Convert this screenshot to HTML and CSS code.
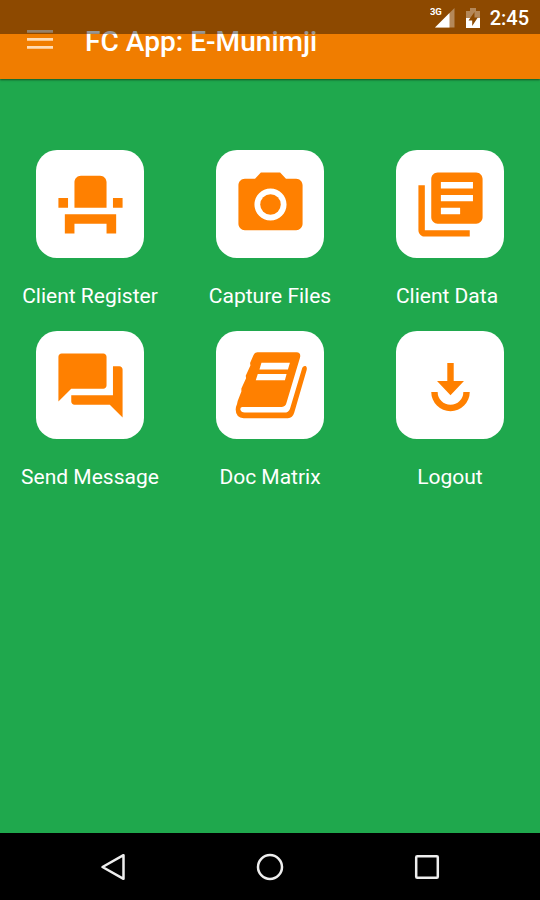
FILE: index.html
```html
<!DOCTYPE html>
<html lang="en">
<head>
  <meta charset="UTF-8" />
  <meta name="viewport" content="width=device-width, initial-scale=1.0"/>
  <title>FC App: E-Munimji</title>
  <link rel="stylesheet" href="styles.css">
</head>
<body>
  <div class="screen">
    <div class="status-bar">
      <svg class="signal" viewBox="0 0 26 22">
        <path class="dim" d="M24.500 2v19.500H5z"/>
        <path d="M19.500 7v14.500H5z"/>
        <text x="0" y="9">3G</text>
      </svg>
      <svg class="battery" viewBox="0 0 14 20">
        <path class="dim" d="M0 10V3h4V0h6v3h4v7z"/>
        <path d="M0 10h14v10H0z"/>
        <path class="bolt" d="M8.500 4L2.500 12.500h3.700V18l5.600-8.500H8.500z"/>
      </svg>
      <span class="clock">2:45</span>
    </div>

    <header class="app-bar">
      <svg class="menu" viewBox="0 0 26 19">
        <path d="M0 0h26v2.800H0zM0 8h26v2.800H0zM0 16h26v2.800H0z"/>
      </svg>
      <h1>FC App: E-Munimji</h1>
    </header>

    <main class="grid">
      <div class="item">
        <div class="tile">
          <svg viewBox="0 0 24 24"><path d="M4 18v3h3v-3h10v3h3v-6H4zm15-8h3v3h-3zM2 10h3v3H2zm15 3H7V5c0-1.100.9-2 2-2h6c1.100 0 2 .9 2 2v8z"/></svg>
        </div>
        <p>Client Register</p>
      </div>

      <div class="item">
        <div class="tile">
          <svg viewBox="0 0 24 24"><circle cx="12" cy="12" r="3.200"/><path d="M9 2L7.170 4H4c-1.100 0-2 .9-2 2v12c0 1.100.9 2 2 2h16c1.100 0 2-.9 2-2V6c0-1.100-.9-2-2-2h-3.170L15 2H9zm3 15c-2.760 0-5-2.240-5-5s2.240-5 5-5 5 2.240 5 5-2.240 5-5 5z"/></svg>
        </div>
        <p>Capture Files</p>
      </div>

      <div class="item">
        <div class="tile">
          <svg viewBox="0 0 24 24"><path d="M4 6H2v14c0 1.100.9 2 2 2h14v-2H4V6zm16-4H8c-1.100 0-2 .9-2 2v12c0 1.100.9 2 2 2h12c1.100 0 2-.9 2-2V4c0-1.100-.9-2-2-2zm-1 5H9V5h10v2zm0 4H9V9h10v2zm-4 4H9v-2h6v2z"/></svg>
        </div>
        <p class="shifted">Client Data</p>
      </div>

      <div class="item">
        <div class="tile">
          <svg viewBox="0 0 24 24"><path d="M21 6h-2v9H6v2c0 .55.450 1 1 1h11l4 4V7c0-.55-.45-1-1-1zm-4 6V3c0-.55-.45-1-1-1H3c-.55 0-1 .45-1 1v14l4-4h10c.55 0 1-.45 1-1z"/></svg>
        </div>
        <p>Send Message</p>
      </div>

      <div class="item">
        <div class="tile">
          <svg viewBox="0 0 230 230">
            <path d="M76 16H193Q207 17 203 32L163 166Q160 179 149 179H31Q24 179 25 187Q27 196 38 196H156Q169 196 173 185L210 62Q214 55 220 57Q225 60 223 69L186 196Q181 213 167 213H35Q11 211 11 187Q11 179 15 170L17 161L28 133L28 124L42 93L41 86L55 55L54 48L64 25Q68 16 76 16z"/>
            <path class="lines" d="M88 47H173L167 67H82zM77 81H163L158 99H71z"/>
          </svg>
        </div>
        <p>Doc Matrix</p>
      </div>

      <div class="item">
        <div class="tile">
          <svg viewBox="0 0 24 24"><path d="M11 5h2v5.600h3.200L12 15l-4.200-4.400H11zM6 14h2a4 4 0 0 0 8 0h2a6 6 0 0 1-12 0z"/></svg>
        </div>
        <p>Logout</p>
      </div>
    </main>

    <nav class="nav-bar">
      <svg viewBox="0 0 28 28"><path d="M24.500 2.200v23.600L3.500 14z"/></svg>
      <svg viewBox="0 0 28 28"><circle cx="14" cy="14" r="12"/></svg>
      <svg viewBox="0 0 28 28"><rect x="3.200" y="3.200" width="21.600" height="21.600" rx="1"/></svg>
    </nav>
  </div>
</body>
</html>
```
FILE: styles.css
```css
body {
  margin: 0;
  font-family: Roboto, sans-serif;
  background-color: #1fa84d;
  color: #fff;
}

.screen {
  position: relative;
  display: flex;
  flex-direction: column;
  height: 900px;
  overflow: hidden;
}

svg {
  display: block;
  flex: none;
}

/* translucent bar over the top of the header */
.status-bar {
  position: absolute;
  top: 0;
  left: 0;
  right: 0;
  z-index: 2;
  height: 34px;
  box-sizing: border-box;
  padding-right: 11px;
  display: flex;
  align-items: center;
  justify-content: flex-end;
  background-color: rgba(0, 0, 0, 0.41);
  fill: #fff;
}

.signal {
  width: 26px;
  height: 22px;
  margin: 0 10px 0 0;
}

.signal text {
  font-size: 9.5px;
  font-weight: bold;
  letter-spacing: -0.3px;
}

.battery {
  width: 14px;
  height: 20px;
  margin: 1px 10px 0 0;
}

.dim {
  fill-opacity: 0.35;
}

.bolt {
  fill: #8d4a00;
}

.clock {
  font-size: 20px;
  font-weight: 500;
  line-height: 34px;
  padding-top: 2px;
}

.app-bar {
  position: relative;
  box-sizing: border-box;
  height: 79px;
  padding: 6px 0 0 27px;
  display: flex;
  align-items: center;
  background-color: #f07d00;
  box-shadow: 0 1px 2px rgba(0, 0, 0, 0.5);
}

.menu {
  width: 26px;
  height: 19px;
  margin-top: -6px;
  fill: #ffdcb4;
}

h1 {
  margin: 0 0 1px 32px;
  font-size: 28.1px;
  font-weight: 500;
  line-height: 32px;
}

.grid {
  flex: 1;
  display: grid;
  grid-template-columns: repeat(3, 180px);
  grid-auto-rows: 181px;
  padding-top: 71px;
}

.item {
  display: flex;
  flex-direction: column;
  align-items: center;
}

.tile {
  width: 108px;
  height: 108px;
  border-radius: 21px;
  display: flex;
  align-items: center;
  justify-content: center;
  background-color: #fff;
}

.tile svg {
  width: 77px;
  height: 77px;
  fill: #ff8000;
}

.tile .lines {
  fill: #fff;
}

p {
  margin: 26px 0 0;
  font-size: 21px;
  line-height: 25px;
  white-space: nowrap;
}

.shifted {
  padding-right: 6px;
}

.nav-bar {
  height: 67px;
  display: flex;
  align-items: center;
  justify-content: center;
  gap: 129px;
  background-color: #000;
}

.nav-bar svg {
  width: 28px;
  height: 28px;
  fill: none;
  stroke: #eee;
  stroke-width: 2.5;
  stroke-linejoin: round;
}
```
